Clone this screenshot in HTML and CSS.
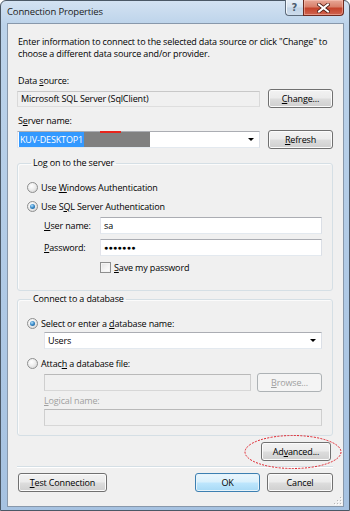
FILE: index.html
```html
<!DOCTYPE html>
<html>
<head>
<meta charset="utf-8">
<link rel="stylesheet" href="styles.css">
</head>
<body>
<div class="window">
  <div class="titlebar">
    <span class="title">Connection Properties</span>
    <div class="caption-btns">
      <div class="cap help">?</div>
      <div class="cap close">
        <svg width="13" height="10" viewBox="0 0 13 10"><path d="M2 1.5 L11 8.5 M11 1.5 L2 8.5" stroke="#4a1a12" stroke-width="3.6" stroke-linecap="square"/><path d="M2 1.5 L11 8.5 M11 1.5 L2 8.5" stroke="#ffffff" stroke-width="2" stroke-linecap="square"/></svg>
      </div>
    </div>
  </div>
  <div class="client">
    <p class="intro">Enter information to connect to the selected data source or click "Change" to choose a different data source and/or provider.</p>

    <div class="lbl mt15">Data <u>s</u>ource:</div>
    <div class="row mt2">
      <div class="textbox readonly grow"><span>Microsoft SQL Server (SqlClient)</span></div>
      <button class="btn"><u>C</u>hange...</button>
    </div>

    <div class="lbl mt7">S<u>e</u>rver name:</div>
    <div class="row mt3">
      <div class="textbox combo grow">
        <span class="sel">KUV-DESKTOP1</span><span class="redact"></span>
        <span class="spacer"></span>
        <span class="arrow"></span>
        <span class="redmark"></span>
      </div>
      <button class="btn"><u>R</u>efresh</button>
    </div>

    <fieldset class="group g1">
      <legend>Log on to the server</legend>
      <div class="opt"><span class="radio"></span><span>Use <u>W</u>indows Authentication</span></div>
      <div class="opt mt3"><span class="radio on"></span><span>Use S<u>Q</u>L Server Authentication</span></div>
      <div class="field mt3"><span class="flabel"><u>U</u>ser name:</span><div class="textbox grow"><span>sa</span></div></div>
      <div class="field mt5"><span class="flabel"><u>P</u>assword:</span><div class="textbox grow pw"><span>●●●●●●●</span></div></div>
      <div class="chkrow mt3"><span class="check"></span><span><u>S</u>ave my password</span></div>
    </fieldset>

    <fieldset class="group g2">
      <legend>Connect to a database</legend>
      <div class="opt"><span class="radio on"></span><span>Select or enter a <u>d</u>atabase name:</span></div>
      <div class="indent mt1">
        <div class="textbox combo"><span>Users</span><span class="spacer"></span><span class="arrow"></span></div>
      </div>
      <div class="opt mt6"><span class="radio"></span><span>Attac<u>h</u> a database file:</span></div>
      <div class="indent row gap6 mt2">
        <div class="textbox disabled grow"></div>
        <button class="btn dis"><u>B</u>rowse...</button>
      </div>
      <div class="indent lbl dtext mt3"><u>L</u>ogical name:</div>
      <div class="indent mt2">
        <div class="textbox disabled"></div>
      </div>
    </fieldset>

    <div class="advrow">
      <button class="btn adv">Ad<u>v</u>anced...</button>
    </div>
    <div class="sep"></div>
    <div class="bottom">
      <button class="btn test"><u>T</u>est Connection</button>
      <span class="spacer"></span>
      <button class="btn default">OK</button>
      <button class="btn cancel">Cancel</button>
    </div>
    <div class="grip">
      <svg width="8" height="8" viewBox="0 0 8 8">
        <g fill="#b8b8b8"><rect x="6" y="0" width="1" height="1"/><rect x="3" y="3" width="1" height="1"/><rect x="6" y="3" width="1" height="1"/><rect x="0" y="6" width="1" height="1"/><rect x="3" y="6" width="1" height="1"/><rect x="6" y="6" width="1" height="1"/></g>
        <g fill="#ffffff"><rect x="7" y="1" width="1" height="1"/><rect x="4" y="4" width="1" height="1"/><rect x="7" y="4" width="1" height="1"/><rect x="1" y="7" width="1" height="1"/><rect x="4" y="7" width="1" height="1"/><rect x="7" y="7" width="1" height="1"/></g>
      </svg>
    </div>
  </div>
  <svg class="annot" width="100" height="38" viewBox="0 0 100 38">
    <ellipse cx="49" cy="18" rx="48" ry="16.5" fill="none" stroke="#e0202a" stroke-width="1" stroke-dasharray="2 1.3"/>
  </svg>
</div>
</body>
</html>
```

FILE: styles.css
```css
* { box-sizing: border-box; }
html, body { margin: 0; padding: 0; }
body {
  width: 350px;
  height: 511px;
  overflow: hidden;
  font-family: "Open Sans", "Noto Sans", sans-serif;
  font-size: 9px;
  letter-spacing: -0.15px;
  color: #000;
  background: #ffffff;
}
u { text-decoration: underline; text-underline-offset: 1px; }

.window {
  position: relative;
  width: 350px;
  height: 511px;
  border: 1px solid #4b5866;
  border-radius: 6px 6px 0 0;
  background: linear-gradient(to bottom, #d3e2f2 0px, #bcd3ea 24px, #afc9e5 60%, #a6c2e1 100%);
  padding: 0 5px 3px 6px;
  display: flex;
  flex-direction: column;
}

.titlebar {
  height: 22px;
  display: flex;
  align-items: flex-start;
}
.title {
  margin-top: 5px;
  font-size: 9.5px;
  line-height: 12px;
  color: #1b1b1b;
}
.caption-btns {
  margin-left: auto;
  margin-top: -1px;
  display: flex;
}
.cap {
  height: 16px;
  border: 1px solid #5d6b7b;
  border-top: none;
  display: flex;
  align-items: center;
  justify-content: center;
}
.help {
  width: 18px;
  border-right: none;
  border-radius: 0 0 0 4px;
  background: linear-gradient(to bottom, #e8eff7 0%, #d5e1ee 48%, #c2d3e5 52%, #cddcec 100%);
  color: #4d5d6f;
  font-family: "DejaVu Sans", sans-serif;
  font-size: 10px;
  font-weight: bold;
  line-height: 14px;
  letter-spacing: 0;
  box-shadow: inset 1px 0 0 #f3f7fb;
}
.close {
  width: 41px;
  border-color: #6e2a1f;
  border-radius: 0 0 4px 0;
  background: linear-gradient(to bottom, #e8a797 0%, #d9806b 45%, #c5432b 55%, #cf6450 100%);
  box-shadow: inset 0 0 0 1px rgba(255,210,200,0.45);
}

.client {
  flex: 1;
  position: relative;
  background: #f0f0f0;
  border: 1px solid #8898ab;
  padding: 12px 10px 0 9px;
  display: flex;
  flex-direction: column;
}

.intro {
  margin: 0 0 0 1px;
  line-height: 12px;
}
.lbl { line-height: 12px; height: 12px; white-space: nowrap; margin-left: 1px; }

.mt1 { margin-top: 1px; }
.mt2 { margin-top: 2px; }
.mt3 { margin-top: 3px; }
.mt5 { margin-top: 5px; }
.mt6 { margin-top: 6px; }
.mt7 { margin-top: 7px; }
.mt15 { margin-top: 15px; }

.row { display: flex; align-items: center; gap: 8px; }
.gap6 { gap: 6px; }
.grow { flex: 1; min-width: 0; }
.spacer { flex: 1; }

.textbox {
  height: 17px;
  background: #ffffff;
  border: 1px solid;
  border-color: #abadb3 #dbdfe6 #e3e9ef #e2e3ea;
  padding: 0 3px;
  line-height: 15px;
  white-space: nowrap;
  display: flex;
  align-items: center;
}
.textbox.readonly {
  background: #f0f0f0;
  border-color: #c8c8c8 #d9d9d9 #dedede #d9d9d9;
  height: 16px;
}
.textbox.disabled {
  background: #f0f0f0;
  border-color: #b9b9b9 #cfcfcf #d7d7d7 #cfcfcf;
}
.textbox.pw { font-size: 7px; letter-spacing: 0.3px; }

.combo { position: relative; padding: 0 3px 0 3px; }
.row .combo { padding-left: 1px; }
.sel {
  background: #3399ff;
  color: #fff;
  height: 15px;
  line-height: 15px;
  padding: 0 1px;
}
.redact {
  display: inline-block;
  width: 66px;
  height: 15px;
  background: #808080;
}
.arrow {
  width: 0;
  height: 0;
  border-left: 3px solid transparent;
  border-right: 3px solid transparent;
  border-top: 3px solid #000;
  margin-right: 2px;
}
.redmark {
  position: absolute;
  left: 82px;
  top: -1px;
  width: 21px;
  height: 2px;
  background: #e8241c;
}

.btn {
  height: 19px;
  width: 65px;
  flex: none;
  padding: 0;
  font: inherit;
  letter-spacing: inherit;
  color: #000;
  border: 1px solid #707070;
  border-radius: 3px;
  background: linear-gradient(to bottom, #f2f2f2 0%, #ebebeb 48%, #dddddd 52%, #cfcfcf 100%);
  box-shadow: inset 0 0 0 1px #fbfbfb;
  line-height: 15px;
}
.btn.dis {
  color: #a0a0a0;
  border-color: #adb2b5;
  background: #f4f4f4;
  box-shadow: none;
}
.btn.default {
  border-color: #3c7fb1;
  background: linear-gradient(to bottom, #eaf6fd 0%, #d9f0fc 48%, #bee6fd 52%, #a7d9f5 100%);
  box-shadow: inset 0 0 0 1px #e6f3fa;
}

.group {
  margin: 0;
  min-width: 0;
  border: 1px solid #d5dfe5;
  border-radius: 3px;
  box-shadow: inset 1px 1px 0 #fbfbfb;
  padding: 10px 10px 0 9px;
}
.group legend {
  padding: 0 2px;
  margin-left: 4px;
  line-height: 12px;
  height: 12px;
}
.g1 { margin-top: 8px; padding-bottom: 15px; }
.g2 { margin-top: 2px; padding-bottom: 9px; }

.opt {
  height: 16px;
  display: flex;
  align-items: center;
  white-space: nowrap;
}
.radio {
  width: 11px;
  height: 11px;
  border-radius: 50%;
  border: 1px solid #8e8f8f;
  background: radial-gradient(circle at 40% 35%, #ffffff 0%, #f0f0f0 40%, #cfcfcf 100%);
  margin-right: 3px;
  position: relative;
  flex: none;
}
.radio.on::after {
  content: "";
  position: absolute;
  left: 2px;
  top: 2px;
  width: 5px;
  height: 5px;
  border-radius: 50%;
  background: radial-gradient(circle at 40% 35%, #b6e1fb 0%, #3c8dcb 45%, #0d4f86 100%);
}

.field { display: flex; align-items: center; padding-left: 17px; }
.flabel { width: 56px; flex: none; white-space: nowrap; }
.chkrow {
  height: 16px;
  display: flex;
  align-items: center;
  padding-left: 73px;
  white-space: nowrap;
}
.check {
  width: 11px;
  height: 11px;
  border: 1px solid #8e8f8f;
  background: linear-gradient(135deg, #e2e2e2 0%, #f6f6f6 60%, #ffffff 100%);
  box-shadow: inset 0 0 0 1px #f4f4f4;
  margin-right: 3px;
  flex: none;
}

.indent { margin-left: 17px; }
.dtext { color: #a0a0a0; margin-left: 17px; }

.advrow { display: flex; justify-content: flex-end; margin-top: 6px; padding-right: 2px; }
.btn.adv { width: 70px; }

.sep {
  margin-top: 5px;
  height: 2px;
  border-top: 1px solid #d5dfe5;
  border-bottom: 1px solid #ffffff;
}

.bottom { display: flex; align-items: center; margin-top: 5px; gap: 7px; padding-left: 1px; }
.btn.test { width: 89px; }
.btn.cancel { width: 66px; }

.grip { position: absolute; right: 1px; bottom: 1px; width: 8px; height: 8px; line-height: 0; }

.annot { position: absolute; left: 243px; top: 433px; }
```
